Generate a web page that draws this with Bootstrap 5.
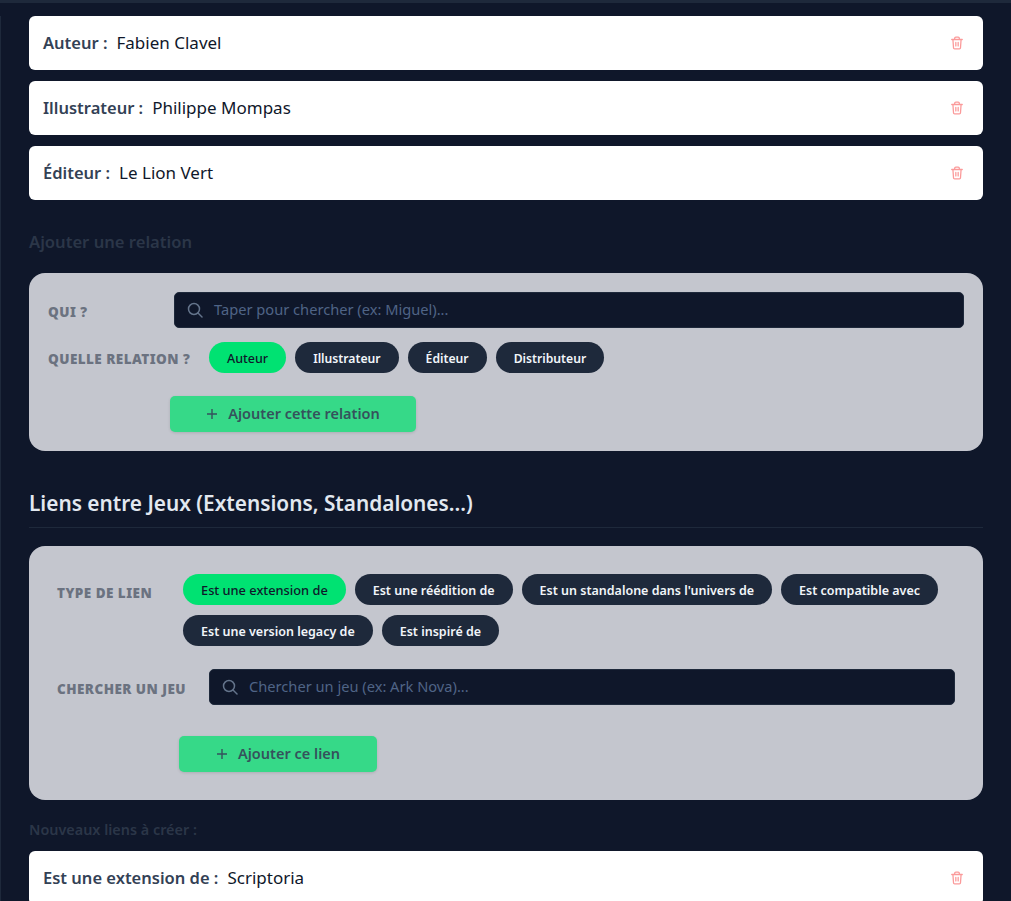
<!DOCTYPE html>
<html lang="fr">
<head>
<meta charset="utf-8">
<title>Relations</title>
<link href="https://cdn.jsdelivr.net/npm/bootstrap@5.3.0/dist/css/bootstrap.min.css" rel="stylesheet">
<style>
html,body{height:901px;overflow:hidden;background:#0f172a;}
body{font-family:"Noto Sans",sans-serif;color:#1e293b;}
.topband{height:3px;background:#1e293b;margin-bottom:13px;}
.pagewrap{padding:0 28px 0 28px;border-left:1px solid #1e293b;}
.itemrow{height:54px;border-radius:6px;padding:0 19px 0 14px;font-size:17px;margin-bottom:11px;color:#0f172a;}
.itemrow b{font-weight:600;font-size:16.5px;color:#334155;margin-right:9px;}
.trash{width:14px;height:14px;stroke:#fb9a9a;fill:none;stroke-width:2.2;stroke-linecap:round;stroke-linejoin:round;}
.subtitle{font-size:16.6px;font-weight:600;color:#2b3648;margin:31px 0 0;line-height:22px;}
.panelbox{background:#c4c6ce;border-radius:16px;}
.panelone{margin-top:20px;padding:19px;height:178px;}
.paneltwo{margin-top:18px;padding:28px;height:254px;}
.fieldlabel{font-size:13.5px;font-weight:900;letter-spacing:.45px;color:#6b7280;text-transform:uppercase;white-space:nowrap;flex:none;}
.searchbox{height:36px;background:#0f172a;border:1px solid #1e293b;border-radius:5px;padding:0 12px;font-size:14.65px;color:#4f6486;}
.searchbox svg{width:16px;height:16px;stroke:#64748b;fill:none;stroke-width:1.5;stroke-linecap:round;margin-right:11px;flex:none;}
.chiprow{gap:10px 9px;}
.chipitem{height:31px;padding:2px 18px 0;border-radius:16px;background:#1e293b;color:#f1f5f9;font-size:12.5px;font-weight:600;border:0;line-height:29px;white-space:nowrap;}
.chipitem.picked{background:#00e272;color:#0f172a;font-weight:500;font-size:12.8px;}
.panelone .chipitem{font-size:12.2px;}
.panelone .chipitem.picked{font-size:12.5px;}
.addbtn{height:36px;background:#36d988;border:0;border-radius:5px;color:#35525c;font-size:14.5px;font-weight:600;box-shadow:0 1px 3px rgba(0,0,0,.12);}
.addbtn svg{width:12px;height:12px;stroke:#35525c;fill:none;stroke-width:1.4;margin-right:10px;}
.sectiontitle{font-size:20.8px;font-weight:600;color:#e2e8f0;margin:38px 0 0;line-height:28px;padding-bottom:10px;border-bottom:1px solid #1e293b;}
.smalltitle{font-size:14.4px;font-weight:600;color:#2b3648;margin:20px 0 12px;line-height:19px;}
.labelrise{padding-top:4px;}
</style>
</head>
<body>
<div class="topband"></div>
<main class="pagewrap">
  <div class="bg-white d-flex align-items-center itemrow"><b>Auteur :</b><span>Fabien Clavel</span>
    <svg class="trash ms-auto" viewBox="0 0 24 24"><path d="M3 6h18M8 6V4a2 2 0 0 1 2-2h4a2 2 0 0 1 2 2v2M19 6l-1 14a2 2 0 0 1-2 2H8a2 2 0 0 1-2-2L5 6M10 11v6M14 11v6"/></svg></div>
  <div class="bg-white d-flex align-items-center itemrow"><b>Illustrateur :</b><span>Philippe Mompas</span>
    <svg class="trash ms-auto" viewBox="0 0 24 24"><path d="M3 6h18M8 6V4a2 2 0 0 1 2-2h4a2 2 0 0 1 2 2v2M19 6l-1 14a2 2 0 0 1-2 2H8a2 2 0 0 1-2-2L5 6M10 11v6M14 11v6"/></svg></div>
  <div class="bg-white d-flex align-items-center itemrow"><b>Éditeur :</b><span>Le Lion Vert</span>
    <svg class="trash ms-auto" viewBox="0 0 24 24"><path d="M3 6h18M8 6V4a2 2 0 0 1 2-2h4a2 2 0 0 1 2 2v2M19 6l-1 14a2 2 0 0 1-2 2H8a2 2 0 0 1-2-2L5 6M10 11v6M14 11v6"/></svg></div>

  <h3 class="subtitle">Ajouter une relation</h3>
  <section class="panelbox panelone">
    <div class="d-flex align-items-center">
      <span class="fieldlabel labelrise" style="width:126px">Qui ?</span>
      <div class="searchbox d-flex align-items-center flex-grow-1"><svg viewBox="0 0 16 16"><circle cx="7" cy="7" r="5.5"/><path d="M11 11l4 4"/></svg>Taper pour chercher (ex: Miguel)...</div>
    </div>
    <div class="d-flex align-items-center" style="margin-top:14px">
      <span class="fieldlabel labelrise" style="width:161px">Quelle relation ?</span>
      <div class="d-flex chiprow">
        <button class="chipitem picked">Auteur</button><button class="chipitem">Illustrateur</button><button class="chipitem">Éditeur</button><button class="chipitem">Distributeur</button>
      </div>
    </div>
    <button class="addbtn d-inline-flex align-items-center justify-content-center" style="width:246px;margin:23px 0 0 122px"><svg viewBox="0 0 12 12"><path d="M6 1v10M1 6h10"/></svg>Ajouter cette relation</button>
  </section>

  <h2 class="sectiontitle">Liens entre Jeux (Extensions, Standalones...)</h2>
  <section class="panelbox paneltwo">
    <div class="d-flex align-items-start">
      <span class="fieldlabel" style="width:126px;line-height:38px">Type de lien</span>
      <div class="d-flex flex-wrap chiprow flex-grow-1">
        <button class="chipitem picked">Est une extension de</button><button class="chipitem">Est une réédition de</button><button class="chipitem">Est un standalone dans l'univers de</button><button class="chipitem">Est compatible avec</button><button class="chipitem">Est une version legacy de</button><button class="chipitem">Est inspiré de</button>
      </div>
    </div>
    <div class="d-flex align-items-center" style="margin-top:23px">
      <span class="fieldlabel labelrise" style="width:152px">Chercher un jeu</span>
      <div class="searchbox d-flex align-items-center flex-grow-1"><svg viewBox="0 0 16 16"><circle cx="7" cy="7" r="5.5"/><path d="M11 11l4 4"/></svg>Chercher un jeu (ex: Ark Nova)...</div>
    </div>
    <button class="addbtn d-inline-flex align-items-center justify-content-center" style="width:198px;margin:31px 0 0 122px"><svg viewBox="0 0 12 12"><path d="M6 1v10M1 6h10"/></svg>Ajouter ce lien</button>
  </section>

  <h4 class="smalltitle">Nouveaux liens à créer :</h4>
  <div class="bg-white d-flex align-items-center itemrow"><b>Est une extension de :</b><span>Scriptoria</span>
    <svg class="trash ms-auto" viewBox="0 0 24 24"><path d="M3 6h18M8 6V4a2 2 0 0 1 2-2h4a2 2 0 0 1 2 2v2M19 6l-1 14a2 2 0 0 1-2 2H8a2 2 0 0 1-2-2L5 6M10 11v6M14 11v6"/></svg></div>
</main>
<script src="https://cdn.jsdelivr.net/npm/bootstrap@5.3.0/dist/js/bootstrap.bundle.min.js"></script>
</body>
</html>
